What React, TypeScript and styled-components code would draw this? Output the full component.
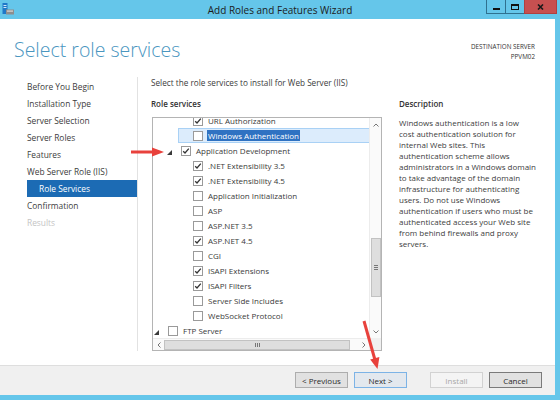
import React from 'react';
import styled, { createGlobalStyle } from 'styled-components';

const GlobalStyle = createGlobalStyle`
  html, body {
    margin: 0;
    padding: 0;
    width: 560px;
    height: 400px;
    overflow: hidden;
    background: #65c6ea;
  }
  body {
    font-family: "Open Sans", "Noto Sans", "DejaVu Sans", sans-serif;
    color: #333;
  }
`;

const Frame = styled.div`
  position: relative;
  width: 560px;
  height: 400px;
  display: flex;
  flex-direction: column;
  background: #65c6ea;
`;

const TitleBar = styled.div`
  height: 19px;
  display: grid;
  grid-template-columns: 1fr auto 1fr;
  align-items: start;
`;

const AppIcon = styled.svg`
  margin: 3px 0 0 2px;
`;

const TitleText = styled.div`
  font-size: 10px;
  line-height: 20px;
  color: #1c1c1c;
`;

const Controls = styled.div`
  justify-self: end;
  display: flex;
  margin-right: 3px;
`;

const CtrlButton = styled.div<{ $close?: boolean }>`
  width: ${p => (p.$close ? 33 : 19)}px;
  height: 14px;
  box-sizing: border-box;
  display: flex;
  align-items: center;
  justify-content: center;
  background: ${p => (p.$close ? '#c75050' : 'transparent')};
  border: 1px solid ${p => (p.$close ? '#b04040' : '#2f7190')};
  border-top: none;
  border-right: ${p => (p.$close ? '1px solid #b04040' : 'none')};
`;

const Body = styled.div`
  flex: 1;
  margin: 0 5px 5px 0;
  background: #fff;
  display: flex;
  flex-direction: column;
`;

const Header = styled.div`
  height: 58px;
  box-sizing: border-box;
  display: flex;
  justify-content: space-between;
  padding: 0 20px 0 14px;
`;

const PageTitle = styled.h1`
  margin: 19px 0 0;
  font-size: 19.5px;
  line-height: 24px;
  font-weight: 300;
  color: #4a96bf;
`;

const ServerInfo = styled.div`
  margin-top: 23px;
  text-align: right;
  font-size: 6.3px;
  line-height: 9.5px;
  color: #333;
`;

const Main = styled.div`
  flex: 1;
  display: flex;
`;

const Nav = styled.div`
  width: 137px;
  margin-bottom: 14px;
  padding-top: 1px;
  border-right: 1px solid #e2e2e2;
  display: flex;
  flex-direction: column;
`;

const NavItem = styled.div<{ $active?: boolean; $disabled?: boolean }>`
  height: 17px;
  line-height: 17px;
  font-size: 8.4px;
  white-space: nowrap;
  margin-left: 27px;
  padding-left: ${p => (p.$active ? 12 : 0)}px;
  background: ${p => (p.$active ? '#1c6bb4' : 'transparent')};
  color: ${p => (p.$active ? '#fff' : p.$disabled ? '#c4c4c4' : '#3c3c3c')};
`;

const Content = styled.div`
  flex: 1;
  padding-left: 13px;
  display: flex;
  flex-direction: column;
`;

const Instruction = styled.div`
  font-size: 8.2px;
  line-height: 12px;
  color: #3c3c3c;
`;

const Columns = styled.div`
  margin-top: 9px;
  display: flex;
  gap: 17px;
`;

const TreeColumn = styled.div`
  width: 231px;
  display: flex;
  flex-direction: column;
`;

const SectionLabel = styled.div`
  font-size: 8px;
  line-height: 12px;
  font-weight: 600;
  color: #333;
`;

const TreeBox = styled.div`
  margin: 7px 0 0 1px;
  height: 234px;
  box-sizing: border-box;
  border: 1px solid #b4b4b4;
  display: grid;
  grid-template-columns: 1fr 12px;
  grid-template-rows: 1fr 12px;
`;

const Viewport = styled.div`
  overflow: hidden;
`;

// list is scrolled a few pixels, so the first row shows only partly
const RowList = styled.div`
  margin-top: -5px;
`;

const Row = styled.div<{ $level: number }>`
  height: 15px;
  display: flex;
  padding-left: ${p => [1, 14, 26][p.$level]}px;
`;

const RowBody = styled.div<{ $selected?: boolean }>`
  flex: 1;
  display: flex;
  align-items: center;
  box-sizing: border-box;
  background: ${p => (p.$selected ? '#dcecfc' : 'transparent')};
  border: 1px solid ${p => (p.$selected ? '#a9d1f5' : 'transparent')};
  border-right: none;
  margin-left: -1px;
`;

const Expander = styled.div`
  width: 14px;
  height: 10px;
  display: flex;
  align-items: flex-end;
  padding-bottom: 1px;
  box-sizing: border-box;
`;

const Box = styled.div`
  width: 10px;
  height: 10px;
  box-sizing: border-box;
  border: 1px solid #9a9a9a;
  background: #fff;
  display: flex;
  align-items: center;
  justify-content: center;
`;

const RowLabel = styled.span<{ $selected?: boolean }>`
  margin-left: 4px;
  padding: 0 1px;
  font-size: 8px;
  line-height: 11px;
  white-space: nowrap;
  background: ${p => (p.$selected ? '#2f72c2' : 'transparent')};
  color: ${p => (p.$selected ? '#fff' : '#3a3a3a')};
`;

const VScroll = styled.div`
  background: #fafafa;
  border-left: 1px solid #ececec;
  display: flex;
  flex-direction: column;
`;

const HScroll = styled.div`
  background: #fafafa;
  border-top: 1px solid #ececec;
  display: flex;
`;

const Corner = styled.div`
  background: #f0f0f0;
`;

const ScrollArrow = styled.div<{ $w?: number; $h?: number }>`
  width: ${p => p.$w ?? 11}px;
  height: ${p => p.$h ?? 13}px;
  flex: none;
  display: flex;
  align-items: center;
  justify-content: center;
`;

const Track = styled.div<{ $vertical?: boolean }>`
  flex: 1;
  display: flex;
  flex-direction: ${p => (p.$vertical ? 'column' : 'row')};
`;

const Thumb = styled.div<{ $offset: number; $size: number; $vertical?: boolean }>`
  box-sizing: border-box;
  background: #dedede;
  border: 1px solid #c2c2c2;
  display: flex;
  align-items: center;
  justify-content: center;
  ${p =>
    p.$vertical
      ? `margin-top: ${p.$offset}px; height: ${p.$size}px; margin-left: 1px; width: 10px;`
      : `margin-left: ${p.$offset}px; width: ${p.$size}px; margin-top: 1px; height: 10px;`}
`;

const Grip = styled.div<{ $vertical?: boolean }>`
  width: ${p => (p.$vertical ? 4 : 5)}px;
  height: ${p => (p.$vertical ? 5 : 4)}px;
  background: ${p =>
    p.$vertical
      ? 'repeating-linear-gradient(to bottom, #777 0 1px, transparent 1px 2px)'
      : 'repeating-linear-gradient(to right, #777 0 1px, transparent 1px 2px)'};
`;

const Description = styled.div`
  width: 145px;
`;

const DescText = styled.div`
  margin-top: 7px;
  font-size: 8px;
  line-height: 11px;
  color: #404040;
  white-space: nowrap;
`;

const Footer = styled.div`
  height: 30px;
  box-sizing: border-box;
  border-top: 1px solid #dedede;
  background: #f0f0f0;
  display: flex;
  justify-content: flex-end;
  align-items: flex-start;
  padding: 6px 13px 0 0;
`;

const ButtonGroup = styled.div`
  display: flex;
  gap: 6px;
  margin-left: 23px;
`;

const WizardButton = styled.div<{ $kind?: 'focus' | 'disabled' | 'default' }>`
  width: 53px;
  height: 16px;
  box-sizing: border-box;
  display: flex;
  align-items: center;
  justify-content: center;
  font-size: 8px;
  border: 1px solid
    ${p =>
      p.$kind === 'focus' ? '#7cb3e6' : p.$kind === 'disabled' ? '#d2d2d2' : p.$kind === 'default' ? '#7a7a7a' : '#adadad'};
  background: ${p => (p.$kind === 'disabled' ? '#f4f4f4' : p.$kind === 'focus' ? '#e3e8ee' : '#e1e1e1')};
  color: ${p => (p.$kind === 'disabled' ? '#a8a8a8' : '#2a2a2a')};
`;

const Annotations = styled.svg`
  position: absolute;
  left: 0;
  top: 0;
  pointer-events: none;
`;

type TreeItem = {
  label: string;
  level: number;
  checked?: boolean;
  expander?: boolean;
  selected?: boolean;
};

const tree: TreeItem[] = [
  { label: 'URL Authorization', level: 2, checked: true },
  { label: 'Windows Authentication', level: 2, selected: true },
  { label: 'Application Development', level: 1, checked: true, expander: true },
  { label: '.NET Extensibility 3.5', level: 2, checked: true },
  { label: '.NET Extensibility 4.5', level: 2, checked: true },
  { label: 'Application Initialization', level: 2 },
  { label: 'ASP', level: 2 },
  { label: 'ASP.NET 3.5', level: 2 },
  { label: 'ASP.NET 4.5', level: 2, checked: true },
  { label: 'CGI', level: 2 },
  { label: 'ISAPI Extensions', level: 2, checked: true },
  { label: 'ISAPI Filters', level: 2, checked: true },
  { label: 'Server Side Includes', level: 2 },
  { label: 'WebSocket Protocol', level: 2 },
  { label: 'FTP Server', level: 0, expander: true },
];

const steps = [
  'Before You Begin',
  'Installation Type',
  'Server Selection',
  'Server Roles',
  'Features',
  'Web Server Role (IIS)',
  'Role Services',
  'Confirmation',
  'Results',
];

const description = [
  'Windows authentication is a low',
  'cost authentication solution for',
  'internal Web sites. This',
  'authentication scheme allows',
  'administrators in a Windows domain',
  'to take advantage of the domain',
  'infrastructure for authenticating',
  'users. Do not use Windows',
  'authentication if users who must be',
  'authenticated access your Web site',
  'from behind firewalls and proxy',
  'servers.',
];

const CheckMark = () => (
  <svg width="8" height="8" viewBox="0 0 8 8">
    <polyline points="1.2,4.2 3,6 6.8,1.6" fill="none" stroke="#333" strokeWidth="1.3" />
  </svg>
);

const ExpandedGlyph = () => (
  <svg width="5" height="5" viewBox="0 0 5 5">
    <polygon points="5,0 5,5 0,5" fill="#3a3a3a" />
  </svg>
);

const App: React.FC = () => {
  return (
    <Frame>
      <GlobalStyle />
      <TitleBar>
        <AppIcon width="12" height="12" viewBox="0 0 12 12">
          <rect x="0.5" y="0" width="5" height="11" fill="#1f78c8" />
          <rect x="1.5" y="2" width="3" height="1" fill="#cfe8fa" />
          <rect x="1.5" y="4" width="3" height="1" fill="#cfe8fa" />
          <rect x="4" y="6.5" width="8" height="5" fill="#8e8e8e" />
          <rect x="5" y="7.5" width="6" height="1.2" fill="#d8d8d8" />
        </AppIcon>
        <TitleText>Add Roles and Features Wizard</TitleText>
        <Controls>
          <CtrlButton>
            <svg width="7" height="6" viewBox="0 0 7 6">
              <rect x="0" y="4" width="7" height="2" fill="#111" />
            </svg>
          </CtrlButton>
          <CtrlButton>
            <svg width="8" height="6" viewBox="0 0 8 6">
              <rect x="0.5" y="0.5" width="7" height="5" fill="none" stroke="#111" />
              <rect x="0" y="0" width="8" height="2" fill="#111" />
            </svg>
          </CtrlButton>
          <CtrlButton $close>
            <svg width="7" height="6" viewBox="0 0 7 6">
              <path d="M1 0.5 L6 5.5 M6 0.5 L1 5.5" stroke="#1a1a1a" strokeWidth="1.6" />
            </svg>
          </CtrlButton>
        </Controls>
      </TitleBar>

      <Body>
        <Header>
          <PageTitle>Select role services</PageTitle>
          <ServerInfo>
            DESTINATION SERVER
            <br />
            PPVM02
          </ServerInfo>
        </Header>

        <Main>
          <Nav>
            {steps.map(step => (
              <NavItem key={step} $active={step === 'Role Services'} $disabled={step === 'Results'}>
                {step}
              </NavItem>
            ))}
          </Nav>

          <Content>
            <Instruction>Select the role services to install for Web Server (IIS)</Instruction>
            <Columns>
              <TreeColumn>
                <SectionLabel>Role services</SectionLabel>
                <TreeBox>
                  <Viewport>
                    <RowList>
                      {tree.map(item => (
                        <Row key={item.label} $level={item.level}>
                          <RowBody $selected={item.selected}>
                            <Expander>{item.expander && <ExpandedGlyph />}</Expander>
                            <Box>{item.checked && <CheckMark />}</Box>
                            <RowLabel $selected={item.selected}>{item.label}</RowLabel>
                          </RowBody>
                        </Row>
                      ))}
                    </RowList>
                  </Viewport>
                  <VScroll>
                    <ScrollArrow>
                      <svg width="6" height="4" viewBox="0 0 6 4">
                        <polyline points="0.5,3.5 3,1 5.5,3.5" fill="none" stroke="#777" />
                      </svg>
                    </ScrollArrow>
                    <Track $vertical>
                      <Thumb $vertical $offset={107} $size={59}>
                        <Grip $vertical />
                      </Thumb>
                    </Track>
                    <ScrollArrow>
                      <svg width="6" height="4" viewBox="0 0 6 4">
                        <polyline points="0.5,0.5 3,3 5.5,0.5" fill="none" stroke="#777" />
                      </svg>
                    </ScrollArrow>
                  </VScroll>
                  <HScroll>
                    <ScrollArrow $h={11}>
                      <svg width="4" height="6" viewBox="0 0 4 6">
                        <polyline points="3.5,0.5 1,3 3.5,5.5" fill="none" stroke="#777" />
                      </svg>
                    </ScrollArrow>
                    <Track>
                      <Thumb $offset={0} $size={186}>
                        <Grip />
                      </Thumb>
                    </Track>
                    <ScrollArrow $h={11}>
                      <svg width="4" height="6" viewBox="0 0 4 6">
                        <polyline points="0.5,0.5 3,3 0.5,5.5" fill="none" stroke="#777" />
                      </svg>
                    </ScrollArrow>
                  </HScroll>
                  <Corner />
                </TreeBox>
              </TreeColumn>

              <Description>
                <SectionLabel>Description</SectionLabel>
                <DescText>
                  {description.map(line => (
                    <div key={line}>{line}</div>
                  ))}
                </DescText>
              </Description>
            </Columns>
          </Content>
        </Main>

        <Footer>
          <ButtonGroup>
            <WizardButton>&lt; Previous</WizardButton>
            <WizardButton $kind="focus">Next &gt;</WizardButton>
          </ButtonGroup>
          <ButtonGroup>
            <WizardButton $kind="disabled">Install</WizardButton>
            <WizardButton $kind="default">Cancel</WizardButton>
          </ButtonGroup>
        </Footer>
      </Body>

      {/* red call-out arrows */}
      <Annotations width="560" height="400" viewBox="0 0 560 400">
        <line x1="131" y1="152" x2="156" y2="152" stroke="#e8413c" strokeWidth="3" />
        <polygon points="152,147.5 164,152 152,156.5" fill="#e8413c" />
        <line x1="364" y1="321" x2="375" y2="360" stroke="#e8413c" strokeWidth="3" />
        <polygon points="370.2,359.5 379.4,357 377.5,369" fill="#e8413c" />
      </Annotations>
    </Frame>
  );
};

export default App;
